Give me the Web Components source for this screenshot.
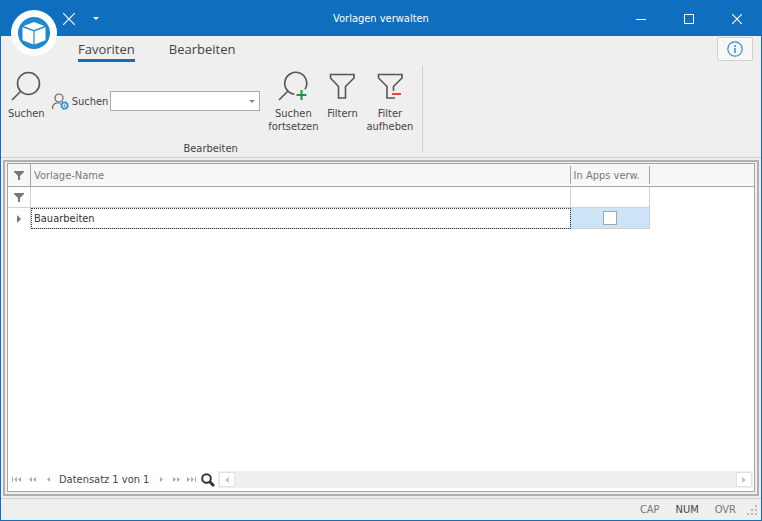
<!DOCTYPE html>
<html lang="de">
<head>
<meta charset="utf-8">
<title>Vorlagen verwalten</title>
<style>
    html, body { height: 100%; margin: 0; }
    body { font: 11px/13px "DejaVu Sans Condensed", "DejaVu Sans", sans-serif; color: #444; }
</style>
</head>
<body>
<template-window></template-window>

<script>
const icons = {
    logo: `<svg width="46" height="46" viewBox="0 0 46 46"><circle cx="23" cy="23" r="23" fill="#fff"/><circle cx="23" cy="23" r="16" fill="#1e88d2"/><path d="M23 12l10.500 4L23 20l-10.500-4zM11.500 17.300l10.900 4v13.200l-10.900-4.200zM34.500 17.300l-10.900 4v13.200l10.900-4.200z" fill="#fff"/></svg>`,
    find: `<svg width="32" height="32" viewBox="0 0 32 32" fill="none" stroke="#555" stroke-width="1.600"><circle cx="18.500" cy="13.500" r="11"/><path d="M10.500 21.500L2 30"/></svg>`,
    findNext: `<svg width="32" height="32" viewBox="0 0 32 32" fill="none" stroke="#555" stroke-width="1.600"><path d="M17.500 24.300a11 11 0 1 1 10.500-5M10.500 21.500L2 30"/><path d="M24.500 20v10M19.500 25h10" stroke="#1e9440" stroke-width="2"/></svg>`,
    filter: `<svg width="32" height="32" viewBox="0 0 32 32" fill="none" stroke="#555" stroke-width="1.600"><path d="M4.500 4.500h23.500v3.500l-8.500 8.500V28h-7V16.500L4.500 8z"/></svg>`,
    filterOff: `<svg width="32" height="32" viewBox="0 0 32 32" fill="none" stroke="#555" stroke-width="1.600"><path d="M19.500 21v-4.500L28 8V4.500H4.500V8l8.500 8.500V28h8"/><path d="M18 24h9" stroke="#e8453c" stroke-width="2"/></svg>`
}

class TitleBar extends HTMLElement {
    constructor() {
        super()
        this.attachShadow({ mode: 'open' })
        this.shadowRoot.innerHTML = `
            <style>
                :host {
                    display: grid;
                    grid-template-columns: 1fr auto 1fr;
                    height: 35px;
                    background: #106ebe;
                    color: #fff;
                }
                .quick, .system { display: flex; align-items: center; }
                .quick { padding-left: 56px; }
                .system { justify-content: flex-end; }
                .title { align-self: center; }
                button {
                    display: grid;
                    place-items: center;
                    height: 35px;
                    padding: 0;
                    border: 0;
                    background: none;
                    color: inherit;
                }
                .quick button { width: 24px; }
                .quick button + button { width: 30px; }
                .system button { width: 48px; }
                svg { display: block; fill: none; stroke: currentColor; }
            </style>
            <div class="quick">
                <button aria-label="Verwerfen"><svg width="12" height="12" stroke-width="1.200"><path d="M0 0l12 12M12 0L0 12"/></svg></button>
                <button aria-label="Schnellzugriff anpassen"><svg width="6" height="3"><path d="M0 0h6L3 3z" fill="#fff" stroke="none"/></svg></button>
            </div>
            <span class="title"><slot></slot></span>
            <div class="system">
                <button aria-label="Minimieren"><svg width="10" height="10"><path d="M0 5.500h10"/></svg></button>
                <button aria-label="Maximieren"><svg width="10" height="10"><path d="M.5.5h9v9h-9z"/></svg></button>
                <button aria-label="Schließen"><svg width="10" height="10" stroke-width="1.200"><path d="M0 0l10 10M10 0L0 10"/></svg></button>
            </div>
        `
    }
}

class RibbonTabs extends HTMLElement {
    constructor() {
        super()
        this.attachShadow({ mode: 'open' })
        this.shadowRoot.innerHTML = `
            <style>
                :host {
                    position: relative;
                    display: flex;
                    align-items: flex-start;
                    height: 28px;
                    padding-left: 77px;
                    padding-right: 8px;
                }
                .logo {
                    position: absolute;
                    left: 10px;
                    top: -26px;
                    width: 46px;
                    height: 46px;
                    padding: 0;
                    border: 0;
                    background: none;
                }
                .logo svg { display: block; }
                nav { display: flex; gap: 34px; flex: 1; }
                .tab {
                    padding: 5px 0 2px;
                    border: 0;
                    border-bottom: 3px solid transparent;
                    background: none;
                    color: inherit;
                    font: 13px/16px "Open Sans", "Noto Sans", sans-serif;
                }
                .tab.active { border-color: #106ebe; }
                .info {
                    display: grid;
                    place-items: center;
                    width: 36px;
                    height: 24px;
                    margin-top: 1px;
                    padding: 0;
                    border: 1px solid #d0d0d0;
                    border-radius: 2px;
                    background: #f8f8f8;
                }
            </style>
            <button class="logo" aria-label="Anwendungsmenü">${icons.logo}</button>
            <nav>
                <button class="tab active">Favoriten</button>
                <button class="tab">Bearbeiten</button>
            </nav>
            <button class="info" aria-label="Info"><svg width="16" height="16" fill="none" stroke="#2b93cc"><circle cx="8" cy="8" r="7.200" stroke-width="1.200"/><path d="M8 7v5M8 4v2" stroke-width="1.500"/></svg></button>
        `
    }
}

class RibbonButton extends HTMLElement {
    constructor() {
        super()
        this.attachShadow({ mode: 'open' })
        this.shadowRoot.innerHTML = `
            <style>
                :host { display: block; }
                button {
                    display: flex;
                    flex-direction: column;
                    align-items: center;
                    gap: 5px;
                    padding: 0;
                    border: 0;
                    background: none;
                    color: inherit;
                    font: inherit;
                }
                svg { display: block; }
            </style>
            <button>${icons[this.getAttribute('icon')]}<span><slot></slot></span></button>
        `
    }
}

class SearchField extends HTMLElement {
    constructor() {
        super()
        this.attachShadow({ mode: 'open' })
        this.shadowRoot.innerHTML = `
            <style>
                :host { display: flex; align-items: center; }
                svg { display: block; }
                label { margin: 0 2px 0 3px; }
                .box {
                    display: flex;
                    width: 150px;
                    height: 20px;
                    box-sizing: border-box;
                    border: 1px solid #ababab;
                    background: #fff;
                }
                input { flex: 1; min-width: 0; border: 0; padding: 0 3px; font: inherit; outline: 0; }
                button { display: grid; place-items: center; width: 15px; padding: 0; border: 0; background: none; }
            </style>
            <svg width="17" height="17" viewBox="0 0 17 17" fill="none" stroke="#666" stroke-width="1.200">
                <circle cx="7" cy="5" r="4"/><path d="M.6 16v-2q1-4 5-4h3"/>
                <circle cx="12.500" cy="12.500" r="3" stroke="#2b93d5" stroke-width="1.500"/>
                <circle cx="12.500" cy="12.500" r="3.700" stroke="#2b93d5" stroke-dasharray="1.500 1.400"/>
                <circle cx="12.500" cy="12.500" r="1" fill="#2b93d5" stroke="none"/>
            </svg>
            <label for="search">Suchen</label>
            <div class="box">
                <input id="search" type="text">
                <button aria-label="Liste öffnen"><svg width="6" height="3"><path d="M0 0h6L3 3z" fill="#888"/></svg></button>
            </div>
        `
    }
}

class RibbonGroup extends HTMLElement {
    constructor() {
        super()
        this.attachShadow({ mode: 'open' })
        this.shadowRoot.innerHTML = `
            <style>
                :host { display: flex; height: 93px; border-bottom: 1px solid #d0d0d0; }
                .group {
                    display: flex;
                    flex-direction: column;
                    justify-content: space-between;
                    height: 87px;
                    margin-top: 2px;
                    box-sizing: border-box;
                    padding: 4px 9px 0 7px;
                    border-right: 1px solid #d0d0d0;
                }
                .items { display: flex; align-items: flex-start; }
                .caption { text-align: center; line-height: 8px; }
            </style>
            <div class="group">
                <div class="items"><slot></slot></div>
                <div class="caption">Bearbeiten</div>
            </div>
        `
    }
}

class DataGrid extends HTMLElement {
    constructor() {
        super()
        const funnel = '<svg width="10" height="9"><path d="M0 0h10v1L6 5v4H4V5L0 1z" fill="#777"/></svg>'
        this.attachShadow({ mode: 'open' })
        this.shadowRoot.innerHTML = `
            <style>
                :host {
                    flex: 1;
                    display: flex;
                    flex-direction: column;
                    min-height: 0;
                    box-sizing: border-box;
                    border: 1px solid #a5a5a5;
                    background: #fff;
                }
                .view { flex: 1; min-height: 0; }
                table { width: 100%; table-layout: fixed; border-collapse: separate; border-spacing: 0; }
                th, td { box-sizing: border-box; padding: 0 3px; text-align: left; font-weight: normal; }
                th { position: relative; height: 23px; background: #f7f7f7; color: #777; border-bottom: 1px solid #a5a5a5; }
                th.ruled::after {
                    content: "";
                    position: absolute;
                    right: 0;
                    top: 2px;
                    bottom: 2px;
                    border-right: 1px solid #a5a5a5;
                }
                td { height: 21px; border-right: 1px solid #d0d0d0; border-bottom: 1px solid #d0d0d0; color: #333; }
                th.mark, td.mark { padding: 0; text-align: center; }
                th.mark { border-right: 1px solid #a5a5a5; }
                td.rest { border: 0; }
                .row .mark { border-bottom: 0; }
                .focus { outline: 1px dotted #333; outline-offset: -1px; }
                .check { background: #cde4f7; text-align: center; }
                input { appearance: none; display: block; width: 14px; height: 14px; margin: 0 auto; border: 1px solid #a5a5a5; background: #fff; }
                svg { display: block; margin: auto; }
            </style>
            <div class="view">
                <table>
                    <colgroup><col style="width: 23px"><col><col style="width: 79px"><col style="width: 14%"></colgroup>
                    <thead><tr>
                        <th class="mark">${funnel}</th>
                        <th class="ruled">Vorlage-Name</th>
                        <th class="ruled">In Apps verw.</th>
                        <th></th>
                    </tr></thead>
                    <tbody>
                        <tr><td class="mark">${funnel}</td><td></td><td></td><td class="rest"></td></tr>
                        <tr class="row">
                            <td class="mark"><svg width="4" height="8"><path d="M0 0l4 4-4 4z" fill="#777"/></svg></td>
                            <td class="focus">Bauarbeiten</td>
                            <td class="check"><input type="checkbox" aria-label="In Apps verw."></td>
                            <td class="rest"></td>
                        </tr>
                    </tbody>
                </table>
            </div>
            <record-navigator></record-navigator>
        `
    }
}

class RecordNavigator extends HTMLElement {
    constructor() {
        super()
        this.attachShadow({ mode: 'open' })
        this.shadowRoot.innerHTML = `
            <style>
                :host { display: flex; align-items: center; height: 19px; padding-bottom: 2px; padding-right: 1px; }
                button { display: grid; place-items: center; width: 16px; height: 17px; padding: 0; border: 0; background: none; }
                .text { margin: 0 5px 0 3px; white-space: nowrap; }
                .next { width: 15px; }
                .glass { width: 18px; }
                svg { display: block; fill: #aaa; }
                .glass svg { fill: none; stroke: #333; }
                .scroll { flex: 1; display: flex; justify-content: space-between; align-items: center; height: 17px; margin-left: 1px; padding: 0 1px; background: #efefef; }
                .scroll button { box-sizing: border-box; border: 1px solid #e2e2e2; background: #fff; height: 15px; }
                .scroll svg { fill: #c5c5c5; }
            </style>
            <button aria-label="Erster"><svg width="9" height="5"><path d="M0 0h1v5H0zM5 0v5L2 2.500zM9 0v5L6 2.500z"/></svg></button>
            <button aria-label="Vorherige Seite"><svg width="7" height="5"><path d="M3 0v5L0 2.500zM7 0v5L4 2.500z"/></svg></button>
            <button aria-label="Vorheriger"><svg width="3" height="5"><path d="M3 0v5L0 2.500z"/></svg></button>
            <span class="text">Datensatz 1 von 1</span>
            <button class="next" aria-label="Nächster"><svg width="3" height="5"><path d="M0 0l3 2.500L0 5z"/></svg></button>
            <button class="next" aria-label="Nächste Seite"><svg width="7" height="5"><path d="M0 0l3 2.500L0 5zM4 0l3 2.500L4 5z"/></svg></button>
            <button class="next" aria-label="Letzter"><svg width="9" height="5"><path d="M0 0l3 2.500L0 5zM4 0l3 2.500L4 5zM8 0h1v5H8z"/></svg></button>
            <button class="glass" aria-label="Suchen"><svg width="14" height="14" stroke-width="2"><circle cx="5.500" cy="5.500" r="4.300"/><path d="M8.500 8.500l4.500 4.500" stroke-width="3"/></svg></button>
            <div class="scroll">
                <button aria-label="Nach links"><svg width="4" height="6"><path d="M4 0v6L0 3z"/></svg></button>
                <button aria-label="Nach rechts"><svg width="4" height="6"><path d="M0 0l4 3-4 3z"/></svg></button>
            </div>
        `
    }
}

class StatusBar extends HTMLElement {
    constructor() {
        super()
        this.attachShadow({ mode: 'open' })
        this.shadowRoot.innerHTML = `
            <style>
                :host {
                    display: flex;
                    justify-content: flex-end;
                    align-items: center;
                    gap: 16px;
                    height: 21px;
                    padding-right: 4px;
                    border-top: 1px solid #d0d0d0;
                    color: #777;
                }
                .on { color: #444; }
                svg { display: block; margin-left: -5px; fill: #bbb; }
            </style>
            <span>CAP</span><span class="on">NUM</span><span>OVR</span>
            <svg width="10" height="10"><path d="M8 0h2v2H8zM8 4h2v2H8zM8 8h2v2H8zM4 4h2v2H4zM4 8h2v2H4zM0 8h2v2H0z"/></svg>
        `
    }
}

class TemplateWindow extends HTMLElement {
    constructor() {
        super()
        this.attachShadow({ mode: 'open' })
        this.shadowRoot.innerHTML = `
            <style>
                :host {
                    display: flex;
                    flex-direction: column;
                    height: 100vh;
                    box-sizing: border-box;
                    border: 1px solid #106ebe;
                    background: #efefef;
                }
                .frame {
                    flex: 1;
                    display: flex;
                    min-height: 0;
                    margin: 2px;
                    padding: 1px 2px 2px;
                    border: 2px solid #b0b0b0;
                }
                .gap { margin-left: 8px; }
                search-field { margin: 21px 0 0 7px; }
            </style>
            <title-bar>Vorlagen verwalten</title-bar>
            <ribbon-tabs></ribbon-tabs>
            <ribbon-group>
                <ribbon-button icon="find">Suchen</ribbon-button>
                <search-field></search-field>
                <ribbon-button class="gap" icon="findNext">Suchen<br>fortsetzen</ribbon-button>
                <ribbon-button class="gap" icon="filter">Filtern</ribbon-button>
                <ribbon-button class="gap" icon="filterOff">Filter<br>aufheben</ribbon-button>
            </ribbon-group>
            <div class="frame"><data-grid></data-grid></div>
            <status-bar></status-bar>
        `
    }
}

customElements.define('title-bar', TitleBar)
customElements.define('ribbon-tabs', RibbonTabs)
customElements.define('ribbon-button', RibbonButton)
customElements.define('search-field', SearchField)
customElements.define('ribbon-group', RibbonGroup)
customElements.define('record-navigator', RecordNavigator)
customElements.define('data-grid', DataGrid)
customElements.define('status-bar', StatusBar)
customElements.define('template-window', TemplateWindow)
</script>
</body>
</html>
